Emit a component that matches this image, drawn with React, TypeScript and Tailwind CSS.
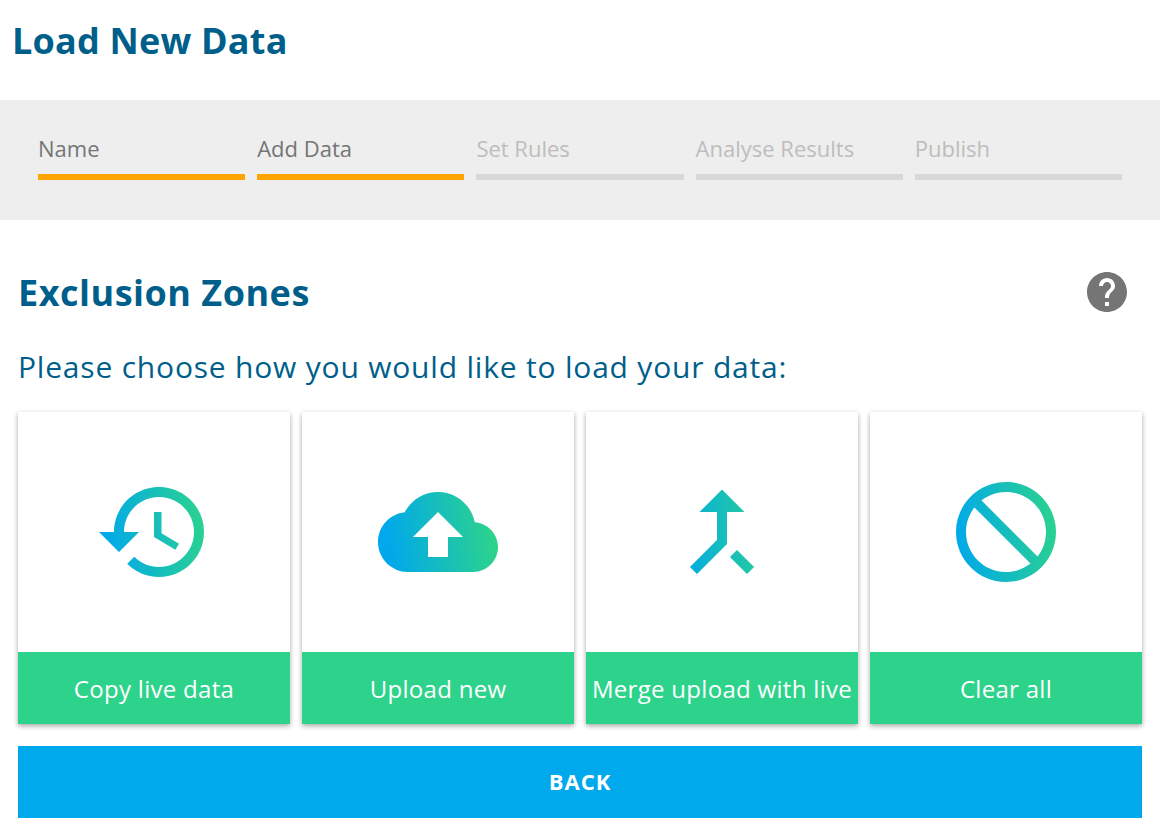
const font = { fontFamily: '"Open Sans", "Noto Sans", sans-serif' };

const steps = [
  { label: "Name", active: true },
  { label: "Add Data", active: true },
  { label: "Set Rules", active: false },
  { label: "Analyse Results", active: false },
  { label: "Publish", active: false },
];

const ICONS = {
  history:
    "M13 3c-4.97 0-9 4.03-9 9H1l3.89 3.89.07.14L9 12H6c0-3.87 3.13-7 7-7s7 3.13 7 7-3.13 7-7 7c-1.93 0-3.68-.79-4.94-2.06l-1.42 1.42C8.27 19.99 10.51 21 13 21c4.97 0 9-4.03 9-9s-4.03-9-9-9zm-1 5v5l4.28 2.54.72-1.21-3.5-2.08V8H12z",
  cloud:
    "M19.35 10.04C18.67 6.59 15.64 4 12 4 9.11 4 6.6 5.64 5.35 8.04 2.34 8.36 0 10.91 0 14c0 3.31 2.69 6 6 6h13c2.76 0 5-2.24 5-5 0-2.64-2.05-4.78-4.65-4.96zM14 13v4h-4v-4H7l5-5 5 5h-3z",
  merge:
    "M17 20.41L18.41 19 15 15.59 13.59 17 17 20.41zM7.5 8H11v5.59L5.59 19 7 20.41l6-6V8h3.5L12 3.5 7.5 8z",
  block:
    "M12 2C6.48 2 2 6.48 2 12s4.48 10 10 10 10-4.48 10-10S17.52 2 12 2zM20 12c0-4.42-3.58-8-8-8-1.85 0-3.55.63-4.9 1.69L18.31 16.9C19.37 15.55 20 13.85 20 12zM12 20c1.85 0 3.55-.63 4.9-1.69L5.69 7.1C4.63 8.45 4 10.15 4 12c0 4.42 3.58 8 8 8z",
};

const cards = [
  { id: "history", label: "Copy live data" },
  { id: "cloud", label: "Upload new" },
  { id: "merge", label: "Merge upload with live" },
  { id: "block", label: "Clear all" },
] as const;

function GradientIcon({ id }: { id: keyof typeof ICONS }) {
  return (
    <svg viewBox="0 0 24 24" className="h-[120px] w-[120px]">
      <defs>
        <linearGradient id={`g-${id}`} gradientUnits="userSpaceOnUse" x1="2" y1="15" x2="23" y2="12">
          <stop offset="0" stopColor="#00a8ec" />
          <stop offset="1" stopColor="#2cd38c" />
        </linearGradient>
      </defs>
      <path d={ICONS[id]} fill={`url(#g-${id})`} fillRule="evenodd" />
    </svg>
  );
}

export default function App() {
  return (
    <div className="min-h-[840px] w-[1160px] bg-white" style={font}>
      <div className="flex h-[100px] items-start px-[12px] pt-[16px]">
        <h1 className="text-[36px] font-bold leading-[50px] tracking-[0.2px] text-[#005f8a]">Load New Data</h1>
      </div>

      <div className="grid h-[120px] grid-cols-5 gap-x-3 bg-[#eeeeee] px-[38px] pt-[32px]">
        {steps.map((s) => (
          <div key={s.label} className="flex h-[48px] flex-col justify-between">
            <span className={`text-[22px] leading-[32px] ${s.active ? "text-[#757575]" : "text-[#bdbdbd]"}`}>
              {s.label}
            </span>
            <span className={`h-[6px] ${s.active ? "bg-[#ffa400]" : "bg-[#d8d8d8]"}`} />
          </div>
        ))}
      </div>

      <div className="px-[18px]">
        <div className="flex h-[104px] items-center justify-between pr-[8px] pt-[42px]">
          <h2 className="text-[36px] font-bold leading-[50px] tracking-[0.5px] text-[#005f8a]">Exclusion Zones</h2>
          <svg viewBox="0 0 24 24" className="mr-[3px] mt-[-2px] h-[48px] w-[48px]">
            <path
              fill="#757575"
              d="M12 2C6.48 2 2 6.48 2 12s4.48 10 10 10 10-4.48 10-10S17.52 2 12 2zm1 17h-2v-2h2v2zm2.07-7.75l-.9.92C13.45 12.9 13 13.5 13 15h-2v-.5c0-1.1.45-2.1 1.17-2.83l1.24-1.26c.37-.36.59-.86.59-1.41 0-1.1-.9-2-2-2s-2 .9-2 2H8c0-2.21 1.79-4 4-4s4 1.79 4 4c0 .88-.36 1.68-.93 2.25z"
            />
          </svg>
        </div>

        <p className="mt-[21px] text-[30px] leading-[44px] tracking-[0.8px] text-[#005f8a]">
          Please choose how you would like to load your data:
        </p>

        <div className="mt-[23px] grid grid-cols-4 gap-x-3">
          {cards.map((c) => (
            <div key={c.id} className="flex h-[312px] flex-col bg-white shadow-[0_2px_5px_rgba(0,0,0,0.35)]">
              <div className="flex h-[240px] items-center justify-center">
                <GradientIcon id={c.id} />
              </div>
              <div className="flex h-[72px] items-center justify-center bg-[#2dd38b] pt-[2px] text-[24px] tracking-[0.3px] whitespace-nowrap text-white">
                {c.label}
              </div>
            </div>
          ))}
        </div>

        <button className="mt-[22px] flex h-[72px] w-full items-center justify-center bg-[#00a8ec] pb-[2px] text-[22px] font-bold tracking-[1px] text-white">
          BACK
        </button>
      </div>
    </div>
  );
}
